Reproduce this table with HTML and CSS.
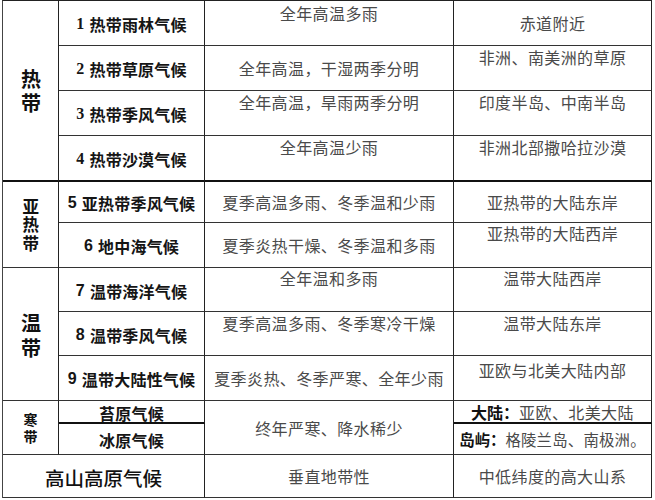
FILE: index.html
```html
<!DOCTYPE html>
<html lang="zh">
<head>
<meta charset="utf-8">
<title>气候类型</title>
<link rel="stylesheet" href="styles.css">
</head>
<body>
<div class="table">
  <div class="cell zone r4 tb"><span class="vert z-hot">热带</span></div>
  <div class="cell name"><span class="num">1</span>热带雨林气候</div>
  <div class="cell desc top t3">全年高温多雨</div>
  <div class="cell desc">赤道附近</div>

  <div class="cell name"><span class="num">2</span>热带草原气候</div>
  <div class="cell desc">全年高温，干湿两季分明</div>
  <div class="cell desc top">非洲、南美洲的草原</div>

  <div class="cell name"><span class="num">3</span>热带季风气候</div>
  <div class="cell desc top">全年高温，旱雨两季分明</div>
  <div class="cell desc top">印度半岛、中南半岛</div>

  <div class="cell name tb"><span class="num">4</span>热带沙漠气候</div>
  <div class="cell desc top tb">全年高温少雨</div>
  <div class="cell desc top tb">非洲北部撒哈拉沙漠</div>

  <div class="cell zone r2"><span class="vert z-sub">亚热带</span></div>
  <div class="cell name"><span class="sans">5</span>亚热带季风气候</div>
  <div class="cell desc">夏季高温多雨、冬季温和少雨</div>
  <div class="cell desc">亚热带的大陆东岸</div>

  <div class="cell name"><span class="sans">6</span>地中海气候</div>
  <div class="cell desc">夏季炎热干燥、冬季温和多雨</div>
  <div class="cell desc top t0">亚热带的大陆西岸</div>

  <div class="cell zone r3"><span class="vert z-temp">温带</span></div>
  <div class="cell name"><span class="sans">7</span>温带海洋气候</div>
  <div class="cell desc top t0">全年温和多雨</div>
  <div class="cell desc top t0">温带大陆西岸</div>

  <div class="cell name"><span class="sans">8</span>温带季风气候</div>
  <div class="cell desc top">夏季高温多雨、冬季寒冷干燥</div>
  <div class="cell desc top">温带大陆东岸</div>

  <div class="cell name"><span class="sans">9</span>温带大陆性气候</div>
  <div class="cell desc">夏季炎热、冬季严寒、全年少雨</div>
  <div class="cell desc top t5">亚欧与北美大陆内部</div>

  <div class="cell zone r2"><span class="vert z-cold">寒带</span></div>
  <div class="cell name tb">苔原气候</div>
  <div class="cell desc r2">终年严寒、降水稀少</div>
  <div class="cell desc tb"><b>大陆：</b>亚欧、北美大陆</div>

  <div class="cell name">冰原气候</div>
  <div class="cell desc small"><b>岛屿：</b>格陵兰岛、南极洲。</div>

  <div class="cell zone c2"><span class="z-high">高山高原气候</span></div>
  <div class="cell desc">垂直地带性</div>
  <div class="cell desc">中低纬度的高大山系</div>
</div>
</body>
</html>
```

FILE: styles.css
```css
html, body {
  margin: 0;
  padding: 0;
  background: #ffffff;
}

body {
  font-family: "Noto Sans CJK SC", "Noto Sans", sans-serif;
  color: #111;
}

.table {
  margin: 0 0 0 2px;
  width: 650px;
  box-sizing: border-box;
  border-top: 1px solid #222;
  border-left: 1px solid #444;
  display: grid;
  grid-template-columns: 56px 146px 249px 198px;
  grid-template-rows: 45px 45px 45px 46px 41px 45px 44px 44px 45px 23px 31px 43px;
}

.cell {
  box-sizing: border-box;
  border-right: 1px solid #222;
  border-bottom: 1px solid #333;
  display: flex;
  align-items: center;
  justify-content: center;
  text-align: center;
  white-space: nowrap;
}

.r2 { grid-row: span 2; }
.r3 { grid-row: span 3; }
.r4 { grid-row: span 4; }
.c2 { grid-column: span 2; }

.tb { border-bottom: 2px solid #111; }

.zone {
  font-weight: 700;
  color: #111;
}

.vert {
  writing-mode: vertical-rl;
  text-orientation: upright;
  line-height: 1;
}

.z-hot {
  font-size: 20px;
  font-weight: 600;
  letter-spacing: 4px;
  margin-bottom: -4px;
}

.z-sub {
  font-size: 16.5px;
  letter-spacing: 2px;
  margin-bottom: -2px;
}

.z-temp {
  font-size: 20px;
  font-weight: 600;
  letter-spacing: 5px;
  margin-bottom: -5px;
  padding-top: 2px;
}

.z-cold {
  font-size: 14px;
  letter-spacing: 3px;
  margin-bottom: -3px;
  padding-top: 2px;
}

.z-high {
  font-size: 19.5px;
  line-height: 22px;
  font-weight: 500;
  padding-top: 3px;
}

.name {
  font-size: 16px;
  font-weight: 700;
  line-height: 18px;
  color: #151515;
  padding-top: 2px;
  letter-spacing: 0.2px;
}

.num {
  font-family: "Liberation Serif", serif;
  font-weight: 700;
  margin-right: 5px;
}

.sans {
  font-family: "Liberation Sans", sans-serif;
  font-weight: 700;
  margin-right: 5px;
}

.desc {
  font-size: 16px;
  line-height: 20px;
  font-weight: 400;
  color: #4a4a4a;
  letter-spacing: 0.4px;
}

.desc b {
  color: #111;
  font-weight: 700;
  letter-spacing: 0;
}

.desc.small {
  font-size: 15.4px;
  letter-spacing: 0.2px;
}

.top {
  align-items: flex-start;
  padding-top: 1px;
}

.top.t0 { padding-top: 0; }
.top.t3 { padding-top: 2px; }
.top.t5 { padding-top: 4px; }
```
